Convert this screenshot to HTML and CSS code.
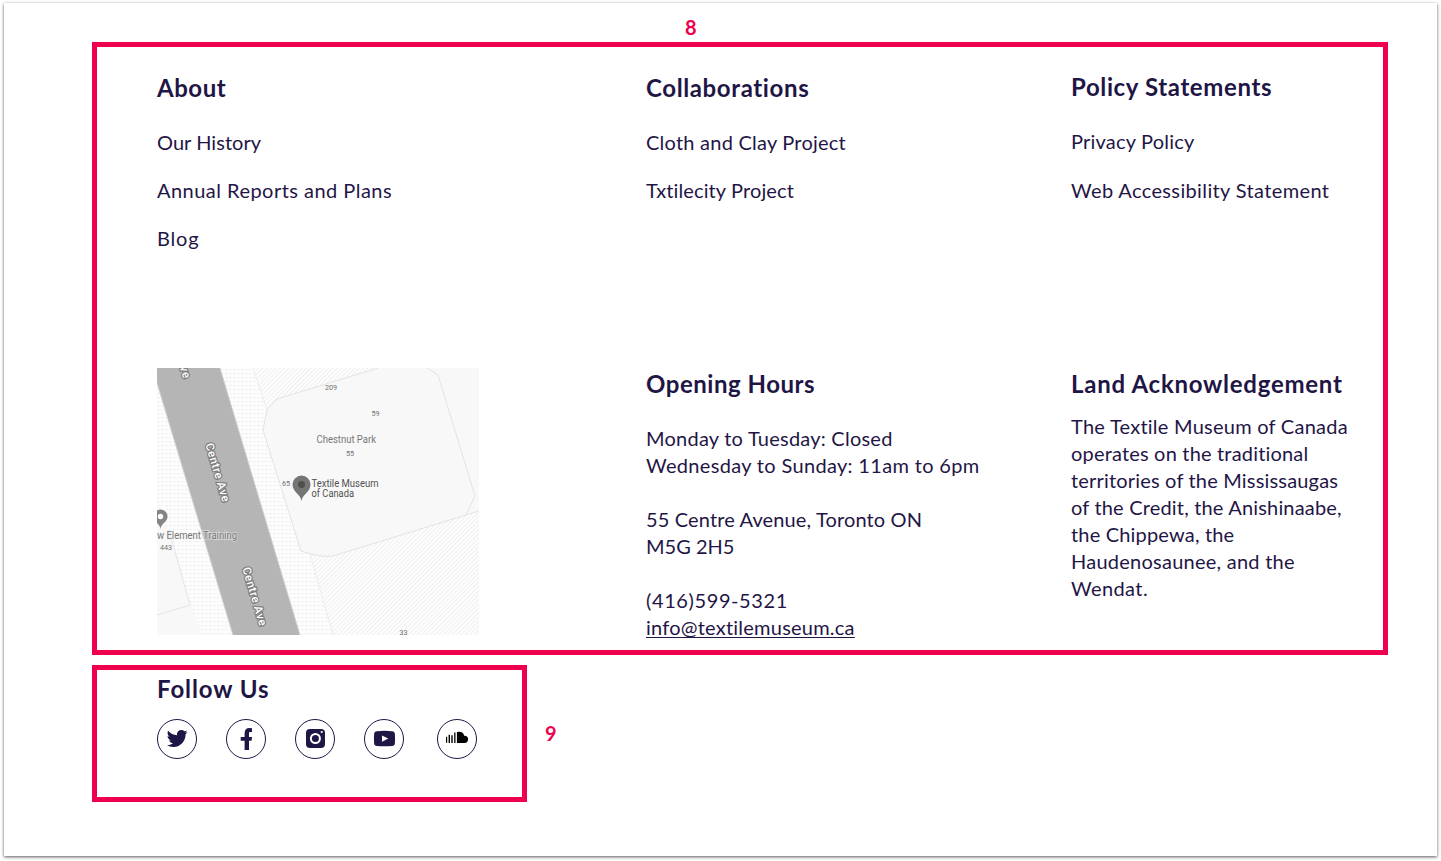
FILE: index.html
```html
<!DOCTYPE html>
<html lang="en">
<head>
<meta charset="utf-8">
<title>Textile Museum of Canada – Footer</title>
<link rel="stylesheet" href="styles.css">
</head>
<body>
<main class="sheet">
  <div class="marker marker-top">8</div>
  <footer class="frame info">
    <section class="about">
      <h2 class="ls-50">About</h2>
      <ul>
        <li class="ls-5">Our History</li>
        <li class="ls-47">Annual Reports and Plans</li>
        <li class="ls-80">Blog</li>
      </ul>
    </section>
    <section>
      <h2>Collaborations</h2>
      <ul>
        <li>Cloth and Clay Project</li>
        <li class="ls-10">Txtilecity Project</li>
      </ul>
    </section>
    <section class="policy">
      <h2>Policy Statements</h2>
      <ul>
        <li class="ls-20">Privacy Policy</li>
        <li class="ls-37">Web Accessibility Statement</li>
      </ul>
    </section>
    <svg class="map" viewBox="0 0 322 267" width="322" height="267">
      <defs>
        <pattern id="dots" width="4" height="4" patternUnits="userSpaceOnUse">
          <rect width="4" height="4" fill="#fdfdfd"/><rect y="1" width="2.6" height="1.2" fill="#f0f0f0"/>
        </pattern>
        <pattern id="hatch" width="3.1" height="3.1" patternUnits="userSpaceOnUse" patternTransform="rotate(45)">
          <rect width="3.1" height="3.1" fill="#fefefe"/><rect width="1" height="3.1" fill="#eeeeee"/>
        </pattern>
      </defs>
      <rect width="322" height="267" fill="url(#dots)"/>
      <path d="M96 0H322V267H176L144 183L106 62L110 42Z" fill="url(#hatch)"/>
      <path d="M144 183L153 186L176 267H143L100 120L106 62Z" fill="url(#dots)"/>
      <path d="M153 186L176 267M96 0L110 42" fill="none" stroke="#ececec"/>
      <path d="M0 128L44 267H0Z" fill="#f8f8f8"/>
      <path d="M12 162L33 237L0 247" fill="none" stroke="#e4e4e4"/>
      <path d="M322 0V143L309 147L176 188Q165 189 144 183L106 62L110 42L120 31L221 0Z" fill="#f8f8f8"/>
      <path d="M221 0L120 31L110 42L106 62L144 183Q165 190 176 188L309 147L322 143M309 147L318 128L281 7L270 0" fill="none" stroke="#e3e3e3"/>
      <path d="M0 0H63L143 267H76L0 15Z" fill="#b5b5b5"/>
      <path d="M63 0L143 267M76 267L0 15" fill="none" stroke="#d0d0d0"/>
      <g class="road">
        <text transform="translate(60.800 104.500) rotate(73.500)" y="4">Centre Ave</text>
        <text transform="translate(97.800 228.500) rotate(73.500)" y="4">Centre Ave</text>
        <text transform="translate(28.500 4) rotate(73.500)" y="4">ve</text>
      </g>
      <g class="num">
        <text x="168" y="22">209</text>
        <text x="214.500" y="47.700">59</text>
        <text x="189" y="87.500">55</text>
        <text x="125" y="117.500">65</text>
        <text x="3" y="181.500">443</text>
        <text x="242.500" y="266.800">33</text>
      </g>
      <text class="area" x="159.500" y="74.700" textLength="59.500" lengthAdjust="spacingAndGlyphs">Chestnut Park</text>
      <text class="place" x="154.500" y="118.700" textLength="67" lengthAdjust="spacingAndGlyphs">Textile Museum</text>
      <text class="place" x="154.500" y="129.200" textLength="42.500" lengthAdjust="spacingAndGlyphs">of Canada</text>
      <text class="area halo" x="0" y="171.200" textLength="80" lengthAdjust="spacingAndGlyphs">w Element Training</text>
      <path d="M144.500 133C143.500 126 135.500 124 135.500 116.500A9 9 0 0 1 153.500 116.500C153.500 124 145.500 126 144.500 133Z" fill="#757575"/>
      <circle cx="144.500" cy="116.500" r="3.500" fill="#4f4f4f"/>
      <path d="M3.500 161C3 155.500-3.500 154-3.500 148.500A7 7 0 0 1 10.500 148.500C10.500 154 4 155.500 3.500 161Z" fill="#858585"/>
      <circle cx="3.500" cy="148.500" r="2.700" fill="#fff"/>
    </svg>
    <section>
      <h2 class="ls-50">Opening Hours</h2>
      <p>Monday to Tuesday: Closed<br><span class="ls-33">Wednesday to Sunday: 11am to 6pm</span></p>
      <p><span class="ls-14">55 Centre Avenue, Toronto ON</span><br><span class="ls-0">M5G 2H5</span></p>
      <p><span class="ls-60">(416)599-5321</span><br><a href="mailto:info@textilemuseum.ca">info@textilemuseum.ca</a></p>
    </section>
    <section class="land">
      <h2 class="ls-74">Land Acknowledgement</h2>
      <p><span class="ls-25">The Textile Museum of Canada</span><br>operates on the traditional<br>territories of the Mississaugas<br>of the Credit, the Anishinaabe,<br>the Chippewa, the<br><span class="ls-25">Haudenosaunee, and the</span><br><span class="ls-40">Wendat.</span></p>
    </section>
  </footer>
  <div class="follow-row">
    <section class="frame follow">
      <h2 class="ls-90">Follow Us</h2>
      <div class="social">
        <svg viewBox="0 0 40 40"><circle class="ring" cx="20" cy="20" r="19.500"/><path transform="translate(9.700 9) scale(.041)" d="M459.370 151.716c.325 4.548.325 9.097.325 13.645 0 138.720-105.583 298.558-298.558 298.558-59.452 0-114.680-17.219-161.137-47.106 8.447.974 16.568 1.299 25.340 1.299 49.055 0 94.213-16.568 130.274-44.832-46.132-.975-84.792-31.188-98.112-72.772 6.498.974 12.995 1.624 19.818 1.624 9.421 0 18.843-1.300 27.614-3.573-48.081-9.747-84.143-51.980-84.143-102.985v-1.299c13.969 7.797 30.214 12.670 47.431 13.319-28.264-18.843-46.781-51.005-46.781-87.391 0-19.492 5.197-37.360 14.294-52.954 51.655 63.675 129.300 105.258 216.365 109.807-1.624-7.797-2.599-15.918-2.599-24.040 0-57.828 46.782-104.934 104.934-104.934 30.213 0 57.502 12.670 76.670 33.137 23.715-4.548 46.456-13.320 66.599-25.340-7.798 24.366-24.366 44.833-46.132 57.827 21.117-2.273 41.584-8.122 60.426-16.243-14.292 20.791-32.161 39.308-52.628 54.253z"/></svg>
        <svg viewBox="0 0 40 40"><circle class="ring" cx="20" cy="20" r="19.500"/><path d="M26 9.200V12.900H24.600C23.200 12.900 23 13.500 23 14.600V17.900H26L25.600 21.700H23V31H18.600V21.700H14.700V17.900H18.600V14.300C18.600 10.900 20.500 9 23.300 9Z"/></svg>
        <svg viewBox="0 0 40 40"><circle class="ring" cx="20" cy="20" r="19.500"/><rect x="11" y="10" width="19" height="19" rx="4"/><circle cx="20.400" cy="19.500" r="4.500" fill="none" stroke="#fff" stroke-width="2"/><circle cx="26.700" cy="13" r="1.100" fill="#fff"/></svg>
        <svg viewBox="0 0 40 40"><circle class="ring" cx="20" cy="20" r="19.500"/><path d="M13 12.200Q20.500 11.400 28 12.200Q30.800 12.300 30.900 15.300Q31.200 19.500 30.900 24Q30.800 26.800 28 27Q20.500 27.600 13 27Q10.200 26.800 10.100 24Q9.800 19.500 10.100 15.300Q10.200 12.300 13 12.200Z"/><path d="M18 16.500L24.300 19.600L18 22.700Z" fill="#fff"/></svg>
        <svg class="cloud" viewBox="0 0 40 40"><circle class="ring" cx="20" cy="20" r="19.500"/><path fill="#000" d="M9 17.700h1.200v6H9zM11.600 15.800h1.400v8.200h-1.400zM14.300 16.200h1.400v7.800h-1.400zM17.200 13.500h1.300v10.500h-1.300zM19.900 13Q26 11.500 27.200 16.700Q31 16.500 31.100 20.300Q31 24 27.500 24H19.900Z"/></svg>
      </div>
    </section>
    <div class="marker">9</div>
  </div>
</main>
</body>
</html>
```

FILE: styles.css
```css
* { box-sizing: border-box; margin: 0; padding: 0; }

body {
  background: #fff;
  padding: 3px 4px 5px;
  font: 20px/27px Lato, "Open Sans", sans-serif;
  letter-spacing: .23px;
  color: #1f1646;
}

.sheet {
  height: 853px;
  padding: 10px 49px 0 88px;
  box-shadow: 0 1px 3px rgba(0, 0, 0, .65);
}

.frame { border: 5px solid #ee004e; }

.marker {
  font: bold 20px/29px Lato, sans-serif;
  letter-spacing: 0;
  color: #ee004e;
}
.marker-top { padding-left: 593px; }

.info {
  display: grid;
  grid-template: 296px 1fr / 489px 425px 1fr;
  height: 613px;
  padding: 23px 0 0 60px;
}

h2 { padding-top: 1px; font-size: 24px; line-height: 33px; letter-spacing: .62px; }
ul { list-style: none; display: grid; gap: 21px; margin-top: 25px; }
p { margin-top: 27px; white-space: nowrap; }
h2 + p { margin-top: 25px; }
.land h2 + p { margin-top: 13px; letter-spacing: .18px; }
.policy { margin-top: -1px; }
.policy ul { gap: 22px; }
a { color: inherit; text-decoration-thickness: 1px; text-underline-offset: 2px; text-decoration-skip-ink: none; }

.map { display: block; margin-top: 2px; font-family: Roboto, sans-serif; letter-spacing: 0; }
.road { font-size: 11.5px; font-weight: 500; fill: #fff; stroke: #808080; stroke-width: 2.5px; paint-order: stroke; text-anchor: middle; letter-spacing: .5px; }
.num { font-size: 7.2px; fill: #707070; }
.area { font-size: 10px; fill: #777; }
.place { font-size: 10px; fill: #505050; }
.halo { stroke: #f4f4f4; stroke-opacity: .6; stroke-width: 1.5px; paint-order: stroke; }

.follow-row { display: flex; align-items: center; gap: 18px; margin-top: 10px; }
.follow { width: 435px; height: 137px; padding: 1px 0 0 60px; }
.social { display: flex; gap: 29px; margin-top: 14px; }
.social svg { width: 40px; height: 40px; fill: #1f1646; }
.social .ring { fill: none; stroke: #1f1646; stroke-width: 1; }
.social .cloud { margin-left: 4px; }

.ls-0 { letter-spacing: 0; }
.ls-5 { letter-spacing: .05px; }
.ls-10 { letter-spacing: .12px; }
.ls-14 { letter-spacing: .14px; }
.ls-20 { letter-spacing: .2px; }
.ls-25 { letter-spacing: .25px; }
.ls-33 { letter-spacing: .33px; }
.ls-37 { letter-spacing: .37px; }
.ls-40 { letter-spacing: .4px; }
.ls-47 { letter-spacing: .47px; }
.ls-50 { letter-spacing: .53px; }
.ls-60 { letter-spacing: .6px; }
.ls-74 { letter-spacing: .74px; }
.ls-80 { letter-spacing: .8px; }
.ls-90 { letter-spacing: .9px; }
```
